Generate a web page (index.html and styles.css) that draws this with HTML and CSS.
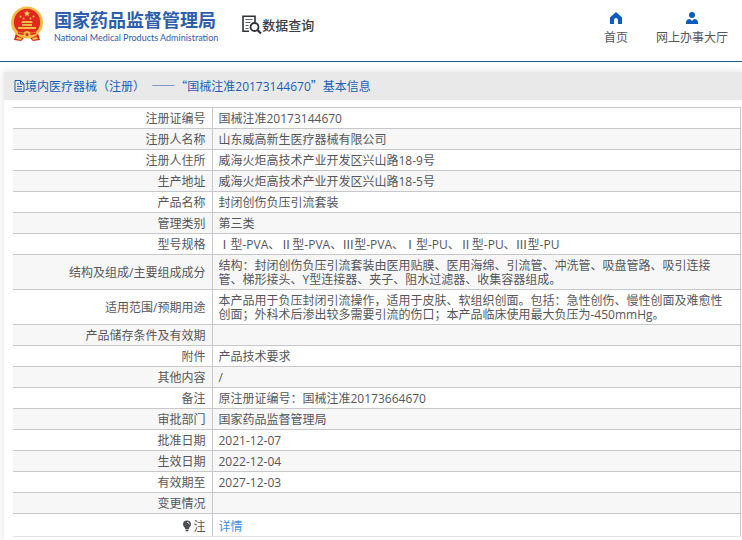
FILE: index.html
```html
<!DOCTYPE html>
<html lang="zh-CN">
<head>
<meta charset="utf-8">
<title>国家药品监督管理局 数据查询</title>
<link rel="stylesheet" href="styles.css">
</head>
<body>
<header class="site-header">
  <a class="brand" href="#">
    <svg class="emblem" viewBox="0 0 34 36" aria-hidden="true">
      <path d="M6 27 L4 34 L11 35 L14 32 L20 32 L23 35 L30 34 L28 27Z" fill="#d9281c"/>
      <circle cx="17" cy="16.500" r="16" fill="#f3bd45"/>
      <circle cx="17" cy="16" r="13.200" fill="#e0281c"/>
      <path d="M17 4.200l.9 2.200 2.300.2-1.800 1.500.6 2.300-2-1.300-2 1.300.6-2.300-1.800-1.500 2.300-.2z" fill="#f9d25c"/>
      <g fill="#f6c851"><circle cx="10.500" cy="10.500" r="1"/><circle cx="23.500" cy="10.500" r="1"/><circle cx="13.500" cy="12.500" r="1"/><circle cx="20.500" cy="12.500" r="1"/></g>
      <path d="M11 17l1.500-2h9l1.500 2zM12 18h10v2H12zM8 21h18v2H8z" fill="#f3bd45"/>
      <path d="M5 25q12 4 24 0l-2 4q-10 3-20 0z" fill="#f3bd45"/>
      <path d="M8 27q9 3 18 0" fill="none" stroke="#d9281c" stroke-width="1.500"/>
      <circle cx="17" cy="28.500" r="3.500" fill="#f3bd45"/>
      <circle cx="17" cy="28.500" r="1.500" fill="#d9281c"/>
      <path d="M7 31l5 1-1 2-5-1zM27 31l-5 1 1 2 5-1z" fill="#f3bd45"/>
    </svg>
    <span class="brand-text">
      <span class="brand-cn">国家药品监督管理局</span>
      <span class="brand-en">National Medical Products Administration</span>
    </span>
  </a>
  <a class="section" href="#">
    <svg class="section-icon" viewBox="0 0 20 20" aria-hidden="true">
      <path d="M13 7V1.200H1v15h6" fill="none" stroke="#2f3038" stroke-width="1.600"/>
      <path d="M3.500 4.500h7M3.500 7.500h5M3.500 10.500h3M3.500 13.500h3" stroke="#62636b" stroke-width="1.200"/>
      <circle cx="12.500" cy="12" r="4" fill="#fff" stroke="#2f3038" stroke-width="1.800"/>
      <path d="M15.500 15l3.500 3.500" stroke="#2f3038" stroke-width="2.200"/>
    </svg>
    <span>数据查询</span>
  </a>
  <nav class="top-nav">
    <a href="#">
      <svg viewBox="0 0 12 12" aria-hidden="true"><path d="M6 0L0 5.500V12h4V8a2 2 0 0 1 4 0v4h4V5.500z" fill="#0a5cbf"/></svg>
      <span>首页</span>
    </a>
    <a href="#">
      <svg viewBox="0 0 12 12" aria-hidden="true"><circle cx="6" cy="3" r="3" fill="#0a5cbf"/><path d="M0 12V10Q.5 7 4 7l2 2 2-2q3.500 0 4 3v2z" fill="#0a5cbf"/></svg>
      <span>网上办事大厅</span>
    </a>
  </nav>
</header>
<main class="panel">
  <h1 class="panel-title">
    <svg viewBox="0 0 11 12" aria-hidden="true"><path d="M1 .5h5.500L10 4v7.500H1zM6.500.5V4H10M3 4h2M3 6.500h5M3 9h5" fill="none" stroke="#1a5fb8"/></svg>
    <span>境内医疗器械（注册）&nbsp; <span class="wide">——</span><span class="wide">“</span>国械注准20173144670<span class="wide">”</span>基本信息</span>
  </h1>
  <div class="panel-body">
    <table class="info">
      <tbody>
        <tr><th scope="row">注册证编号</th><td>国械注准20173144670</td></tr>
        <tr><th scope="row">注册人名称</th><td>山东威高新生医疗器械有限公司</td></tr>
        <tr><th scope="row">注册人住所</th><td>威海火炬高技术产业开发区兴山路18-9号</td></tr>
        <tr><th scope="row">生产地址</th><td>威海火炬高技术产业开发区兴山路18-5号</td></tr>
        <tr><th scope="row">产品名称</th><td>封闭创伤负压引流套装</td></tr>
        <tr><th scope="row">管理类别</th><td>第三类</td></tr>
        <tr><th scope="row">型号规格</th><td>Ⅰ型-PVA、Ⅱ型-PVA、Ⅲ型-PVA、Ⅰ型-PU、Ⅱ型-PU、Ⅲ型-PU</td></tr>
        <tr><th scope="row">结构及组成/主要组成成分</th><td>结构：封闭创伤负压引流套装由医用贴膜、医用海绵、引流管、冲洗管、吸盘管路、吸引连接管、梯形接头、Y型连接器、夹子、阻水过滤器、收集容器组成。</td></tr>
        <tr><th scope="row">适用范围/预期用途</th><td>本产品用于负压封闭引流操作，适用于皮肤、软组织创面。包括：急性创伤、慢性创面及难愈性创面；外科术后渗出较多需要引流的伤口；本产品临床使用最大负压为-450mmHg。</td></tr>
        <tr><th scope="row">产品储存条件及有效期</th><td></td></tr>
        <tr><th scope="row">附件</th><td>产品技术要求</td></tr>
        <tr><th scope="row">其他内容</th><td>/</td></tr>
        <tr><th scope="row">备注</th><td>原注册证编号：国械注准20173664670</td></tr>
        <tr><th scope="row">审批部门</th><td>国家药品监督管理局</td></tr>
        <tr><th scope="row">批准日期</th><td>2021-12-07</td></tr>
        <tr><th scope="row">生效日期</th><td>2022-12-04</td></tr>
        <tr><th scope="row">有效期至</th><td>2027-12-03</td></tr>
        <tr><th scope="row">变更情况</th><td></td></tr>
        <tr class="note"><th scope="row"><svg viewBox="0 0 10 12" aria-hidden="true"><path d="M5 .5a4 4 0 0 1 4 4C9 6.500 7 7 6.800 9H3.200C3 7 1 6.500 1 4.500a4 4 0 0 1 4-4zM3.500 9.500h3v1l-1 1h-1l-1-1z" fill="#4d4f53"/><path d="M5 2.300q2 0 2.200 2" fill="none" stroke="#fff" stroke-width=".8"/></svg>注</th><td><a href="#">详情</a></td></tr>
      </tbody>
    </table>
  </div>
</main>
</body>
</html>
```
FILE: styles.css
```css
* { box-sizing: border-box; }

body {
  margin: 0;
  background: #fff;
  color: #55565a;
  font: 12px/14px "Open Sans", "Noto Sans CJK SC", sans-serif;
}

a { color: inherit; text-decoration: none; }
svg { display: block; flex: none; }

.site-header {
  display: flex;
  align-items: flex-start;
  height: 62px;
  padding: 6px 14px 0 10px;
  border-bottom: 1px solid #1d5a92;
}

.brand { display: flex; gap: 10px; }
.emblem { width: 34px; height: 36px; }
.brand-text { display: flex; flex-direction: column; gap: 1px; padding-top: 2px; color: #2d5dab; white-space: nowrap; }
.brand-cn { font-size: 18px; line-height: 24px; font-weight: 700; }
.brand-en { font: 400 9px/10px Lato, sans-serif; }

.section {
  display: flex;
  align-items: center;
  margin: 9px 0 0 24px;
  color: #3c3d42;
  font-size: 13px;
  line-height: 20px;
  font-weight: 500;
}
.section-icon { width: 20px; height: 20px; }

.top-nav { display: flex; gap: 28px; margin-left: auto; padding-top: 6px; }
.top-nav a { display: flex; flex-direction: column; align-items: center; gap: 7px; }
.top-nav svg { width: 12px; height: 12px; }

.panel {
  margin: 10px 0 0 4px;
  box-shadow: 0 0 8px #ddd;
  background: #fff;
}
.panel-title {
  display: flex;
  align-items: center;
  height: 28px;
  margin: 0;
  padding: 0 10px;
  background: #e9e9e9;
  color: #1a5fb8;
  font-size: 12px;
  font-weight: 400;
}
.panel-title svg { width: 11px; height: 12px; }
.wide { font-family: "Noto Sans CJK SC", sans-serif; }

.panel-body { padding: 7px 1px 4px 9px; }

.info {
  width: 100%;
  border-collapse: collapse;
  border-top: 1px solid #c8c8cc;
  border-right: 1px solid #c8c8cc;
}
.info th, .info td {
  height: 21px;
  padding: 4px 6px 2px;
  border-bottom: 1px solid #c8c8cc;
  font-weight: 400;
}
.info th { width: 199px; border-right: 1px solid #c8c8cc; text-align: right; }
.info td { text-align: left; }
.info tr:nth-child(even) { background: #f7f7f7; }
.info .note th, .info .note td { height: 23px; padding-top: 5px; border-bottom-color: #e4e4e6; }
.note svg { display: inline-block; width: 10px; height: 12px; vertical-align: -1px; margin-right: 1px; }
.note a { color: #3d8fe0; }
```
